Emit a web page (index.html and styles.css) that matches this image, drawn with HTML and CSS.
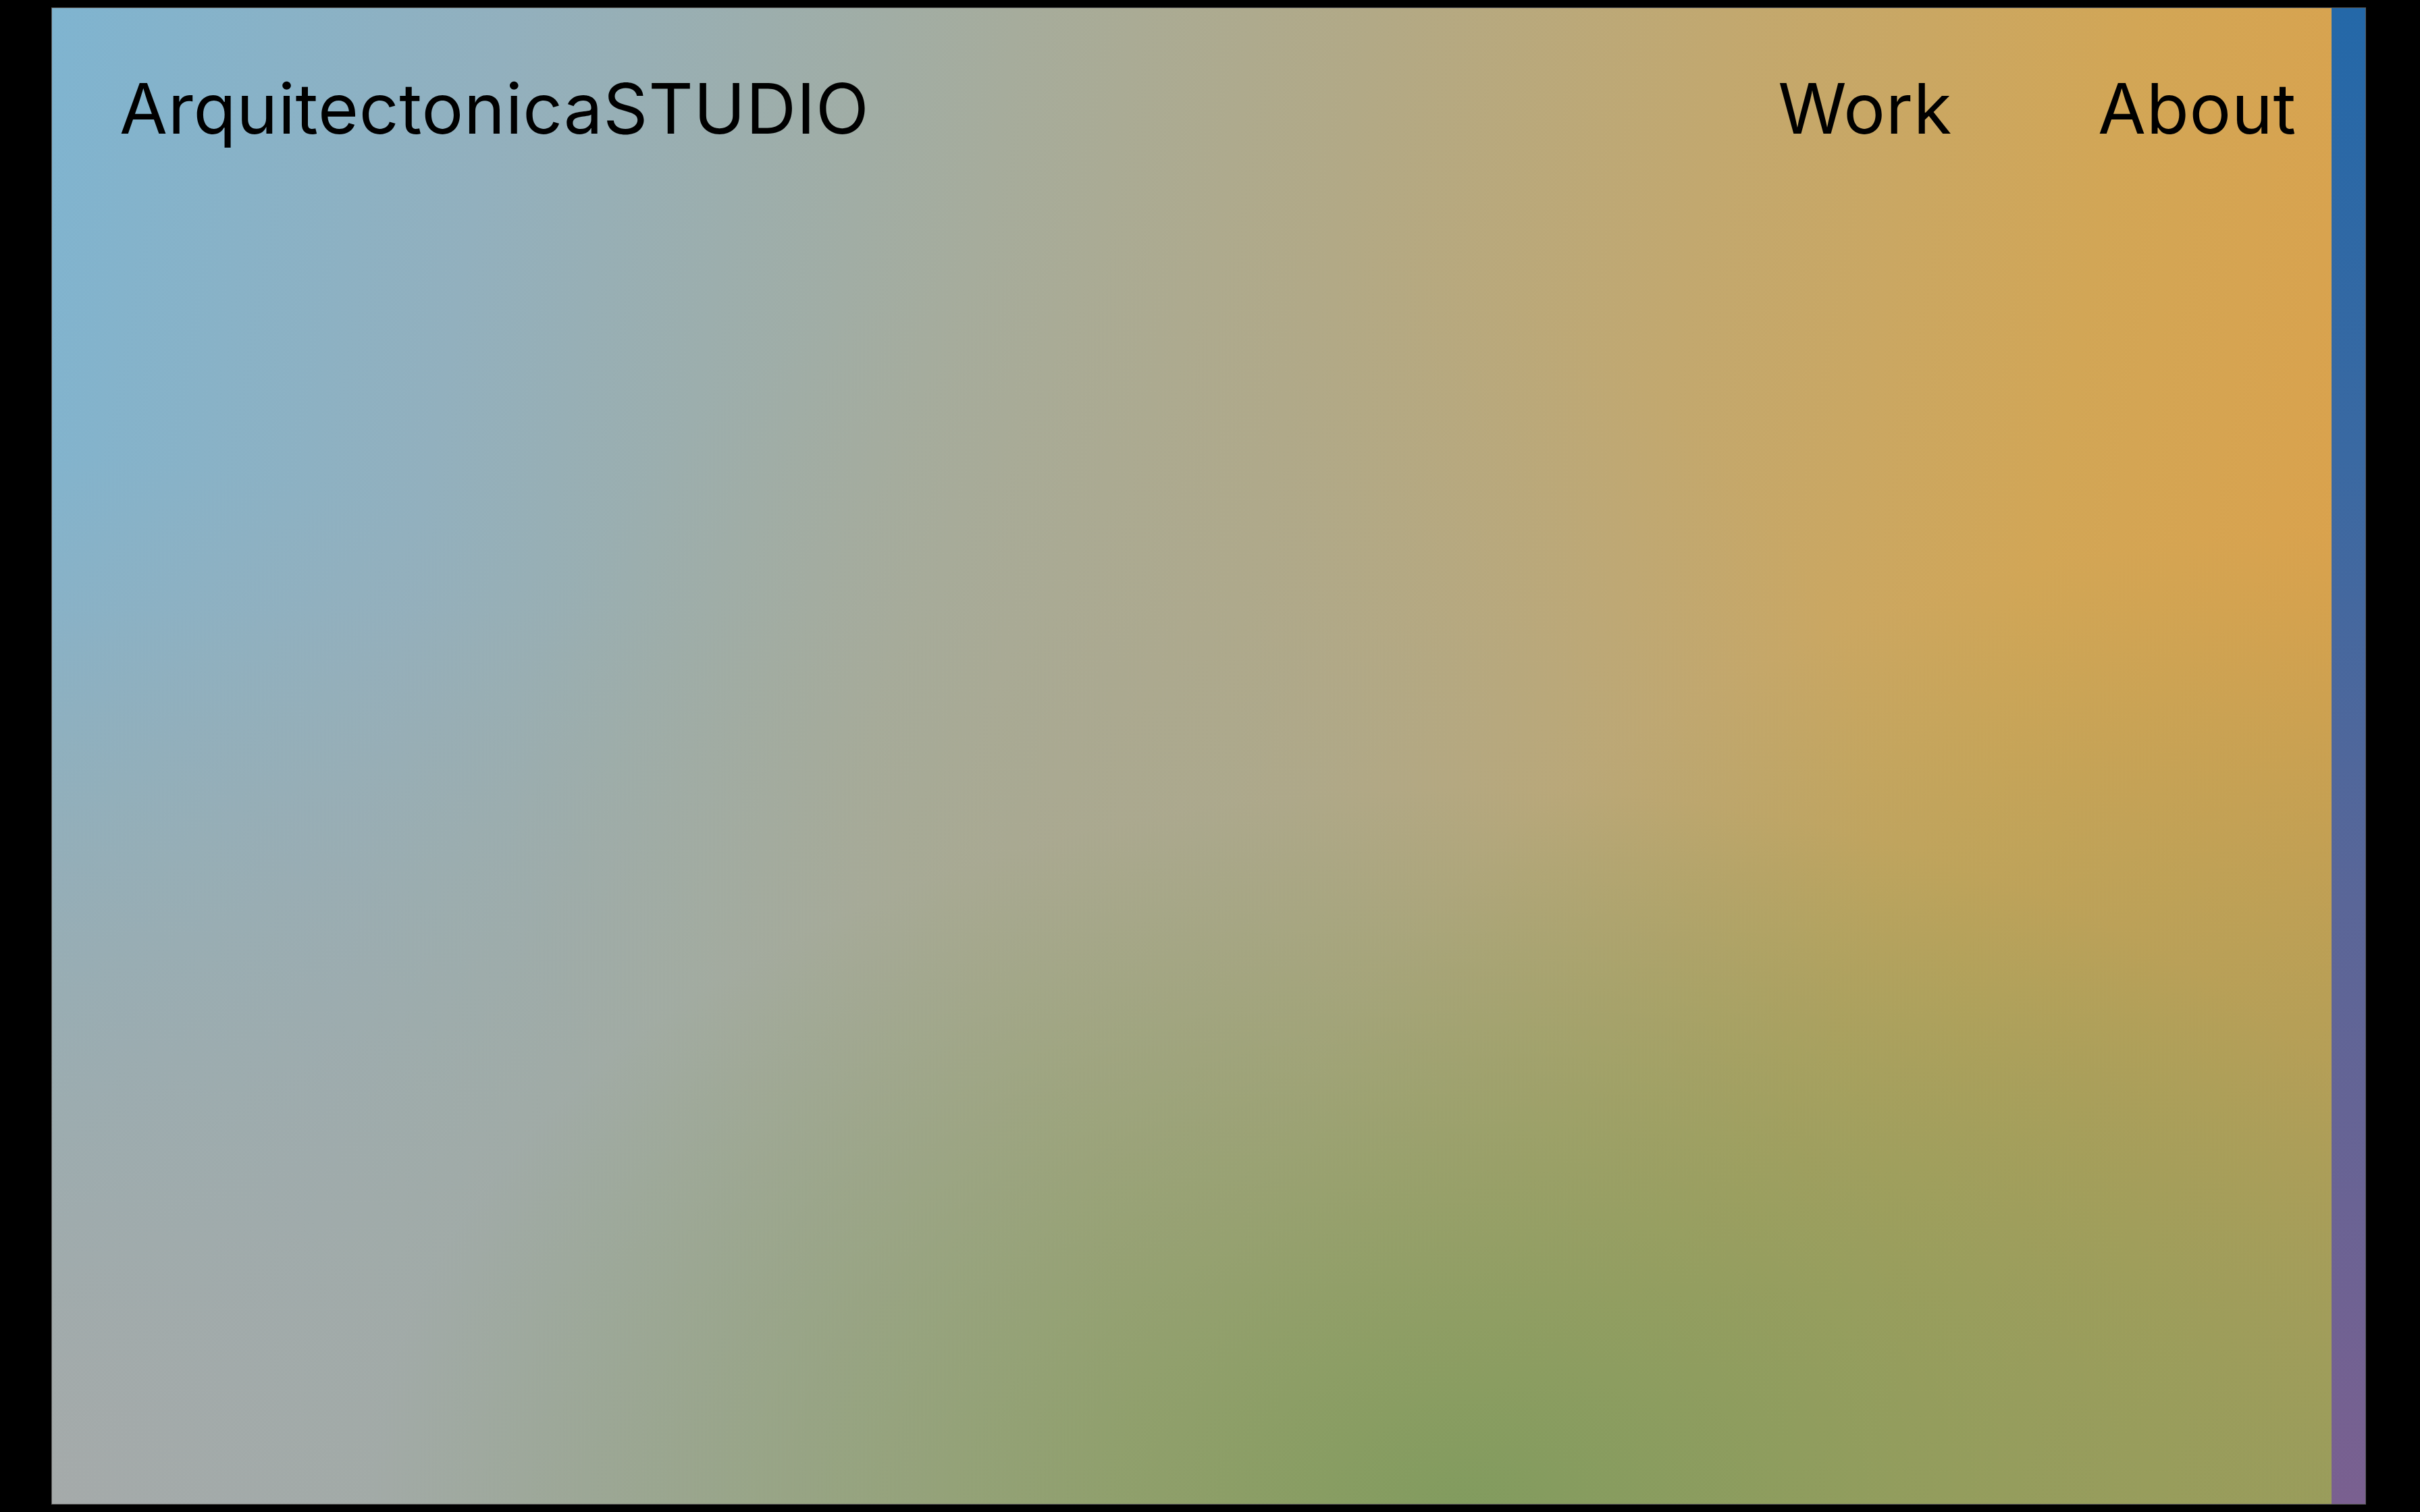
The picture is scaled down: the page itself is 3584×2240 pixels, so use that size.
FILE: index.html
```html
<!DOCTYPE html>
<html lang="en">
<head>
<meta charset="utf-8">
<title>ArquitectonicaSTUDIO</title>
<link rel="stylesheet" href="styles.css">
</head>
<body>
<div class="frame">
  <main class="canvas">
    <header class="site-header">
      <a class="brand" href="#">ArquitectonicaSTUDIO</a>
      <nav class="nav">
        <a class="nav-link" href="#">Work</a>
        <a class="nav-link" href="#">About</a>
      </nav>
    </header>
  </main>
  <div class="strip"></div>
</div>
</body>
</html>
```

FILE: styles.css
```css
html, body {
  margin: 0;
  padding: 0;
  background: #000;
}
body {
  width: 3584px;
  height: 2240px;
  overflow: hidden;
  font-family: Inter, "Liberation Sans", sans-serif;
}
.frame {
  box-sizing: border-box;
  margin: 11px 80px 0 76px;
  height: 2218px;
  display: flex;
  border: 1px solid #5a5a5a;
}
.canvas {
  flex: 1;
  min-width: 0;
  background:
    radial-gradient(ellipse 48% 48% at 62% 100%, rgba(122,154,92,0.85) 0%, rgba(122,154,92,0.45) 45%, rgba(122,154,92,0) 100%),
    radial-gradient(ellipse 50% 65% at 100% 100%, rgba(150,156,92,0.8) 0%, rgba(150,156,92,0.45) 50%, rgba(150,156,92,0) 100%),
    radial-gradient(ellipse 48% 70% at 0% 100%, rgba(166,170,170,0.95) 0%, rgba(166,170,170,0.5) 50%, rgba(166,170,170,0) 100%),
    radial-gradient(ellipse 30% 40% at 50% 55%, rgba(168,168,148,0.5) 0%, rgba(168,168,148,0) 100%),
    linear-gradient(to bottom, rgba(160,162,120,0) 40%, rgba(160,162,120,0.35) 100%),
    linear-gradient(100deg, #7fb4d0 0%, #92b0be 18%, #a6ac9c 38%, #b2a986 52%, #c2a86f 66%, #d2a656 82%, #dea048 100%);
}
.strip {
  width: 50px;
  flex: none;
  background: linear-gradient(to bottom, #2468a8 0%, #3a69a2 30%, #5a6698 60%, #7a6090 100%);
}
.site-header {
  display: flex;
  justify-content: space-between;
  align-items: baseline;
  padding: 97px 52px 0 100px;
}
.brand, .nav-link {
  color: #000;
  text-decoration: none;
  font-size: 103px;
  font-weight: 400;
  line-height: 1;
  letter-spacing: 0.7px;
}
.nav {
  display: flex;
  gap: 216px;
}
```
